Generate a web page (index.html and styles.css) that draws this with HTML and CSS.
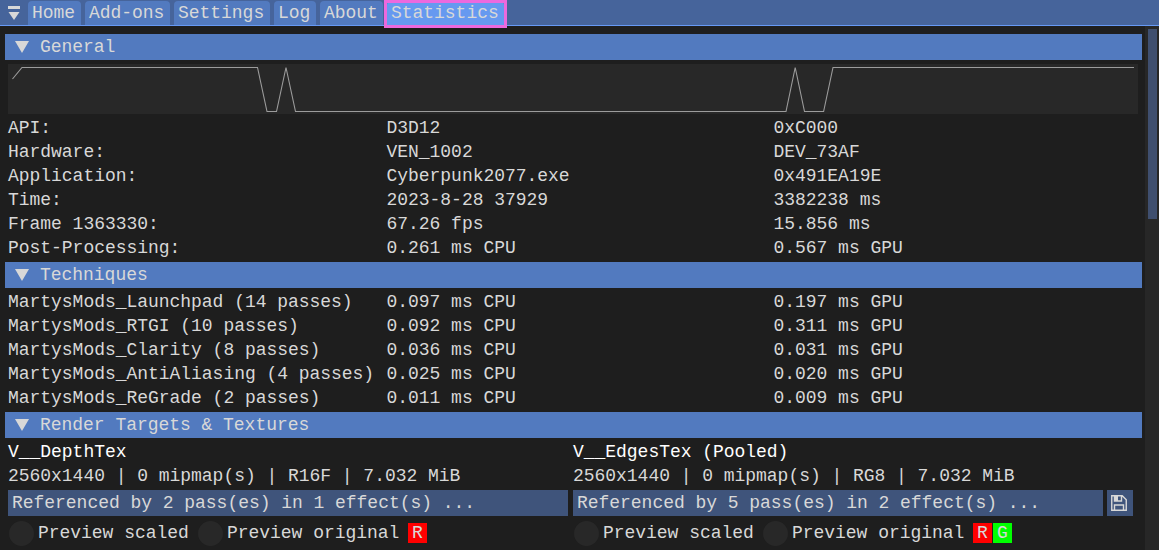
FILE: index.html
```html
<!DOCTYPE html>
<html lang="en">
<head>
<meta charset="utf-8">
<title>Statistics</title>
<link rel="stylesheet" href="styles.css">
</head>
<body>
<div class="app">
  <nav class="tabs">
    <svg class="menu" width="12" height="15" viewBox="0 0 12 15"><path d="M0 0h12v3H0zM0.500 6h11L6 14z"/></svg>
    <span class="tab home">Home</span>
    <span class="tab addons">Add-ons</span>
    <span class="tab settings">Settings</span>
    <span class="tab log">Log</span>
    <span class="tab about">About</span>
    <span class="tab active">Statistics</span>
  </nav>
  <div class="body">
    <main class="content">
      <h2 class="header"><svg class="arrow" width="14" height="12" viewBox="0 0 14 12"><path d="M0 0h14L7 12z"/></svg><span>General</span></h2>
      <svg class="graph" width="1130" height="50" viewBox="8 64 1130 50"><polyline points="12.5,79 22,67.5 257.5,67.5 267,111.5 276.5,111.5 286,67.5 295.5,111.5 786,111.5 795.2,67.5 804.5,111.5 823.6,111.5 833,67.5 1134,67.5"/></svg>
      <div class="grid info">
        <span>API:</span><span>D3D12</span><span>0xC000</span>
        <span>Hardware:</span><span>VEN_1002</span><span>DEV_73AF</span>
        <span>Application:</span><span>Cyberpunk2077.exe</span><span>0x491EA19E</span>
        <span>Time:</span><span>2023-8-28 37929</span><span>3382238 ms</span>
        <span>Frame 1363330:</span><span>67.26 fps</span><span>15.856 ms</span>
        <span>Post-Processing:</span><span>0.261 ms CPU</span><span>0.567 ms GPU</span>
      </div>
      <h2 class="header"><svg class="arrow" width="14" height="12" viewBox="0 0 14 12"><path d="M0 0h14L7 12z"/></svg><span>Techniques</span></h2>
      <div class="grid">
        <span>MartysMods_Launchpad (14 passes)</span><span>0.097 ms CPU</span><span>0.197 ms GPU</span>
        <span>MartysMods_RTGI (10 passes)</span><span>0.092 ms CPU</span><span>0.311 ms GPU</span>
        <span>MartysMods_Clarity (8 passes)</span><span>0.036 ms CPU</span><span>0.031 ms GPU</span>
        <span>MartysMods_AntiAliasing (4 passes)</span><span>0.025 ms CPU</span><span>0.020 ms GPU</span>
        <span>MartysMods_ReGrade (2 passes)</span><span>0.011 ms CPU</span><span>0.009 ms GPU</span>
      </div>
      <h2 class="header"><svg class="arrow" width="14" height="12" viewBox="0 0 14 12"><path d="M0 0h14L7 12z"/></svg><span>Render Targets &amp; Textures</span></h2>
      <div class="textures">
        <section class="texture">
          <div class="line name">V__DepthTex</div>
          <div class="line">2560x1440 | 0 mipmap(s) | R16F | 7.032 MiB</div>
          <div class="actions"><div class="button">Referenced by 2 pass(es) in 1 effect(s) ...</div></div>
          <div class="previews">
            <i class="radio"></i><span class="scaled">Preview scaled</span><i class="radio"></i><span class="original">Preview original</span><b class="channel red">R</b>
          </div>
        </section>
        <section class="texture">
          <div class="line name">V__EdgesTex (Pooled)</div>
          <div class="line">2560x1440 | 0 mipmap(s) | RG8 | 7.032 MiB</div>
          <div class="actions"><div class="button">Referenced by 5 pass(es) in 2 effect(s) ...</div>
            <div class="save"><svg width="16" height="16" viewBox="0 0 16 16"><path d="M.75.75h10.500l4 4v10.500H.75zM3.500 1v5h7V1M3.500 15v-5h9v5"/><path class="solid" d="M4 1h3v5H4z"/></svg></div></div>
          <div class="previews">
            <i class="radio"></i><span class="scaled">Preview scaled</span><i class="radio"></i><span class="original">Preview original</span><b class="channel red">R</b><b class="channel green">G</b>
          </div>
        </section>
      </div>
    </main>
    <div class="scrollbar"><div class="thumb"></div></div>
  </div>
</div>
</body>
</html>
```
FILE: styles.css
```css
* { box-sizing: border-box; }
body {
  margin: 0;
  background: #1e1e1e;
  color: #d8d8d8;
  font: 18px/24px "Liberation Mono", monospace;
  letter-spacing: -0.033px;
  white-space: nowrap;
  overflow: hidden;
}
.app { width: 1159px; height: 550px; overflow: hidden; }
.tabs {
  display: flex;
  gap: 4px;
  height: 26px;
  padding: 1px 0 0 8px;
  background: #46649b;
  border-bottom: 1px solid #6699f5;
}
.menu { margin: 5px 4px 0 0; fill: #d8d8d8; }
.tab {
  height: 24px;
  padding-left: 4px;
  border-radius: 4px 4px 0 0;
  background: #527abf;
}
.home { width: 53px; }
.addons { width: 85px; }
.settings { width: 96px; }
.log { width: 42px; }
.about { width: 63px; }
.active {
  position: relative;
  width: 117px;
  margin-left: 0;
  background: #6699f0;
}
.active::after {
  content: "";
  position: absolute;
  inset: -1px -3px -3px;
  border: 3px solid #ec69de;
}
.body { display: flex; height: 524px; }
.content { width: 1145px; padding: 8px 3px 0 5px; }
.header {
  display: flex;
  align-items: center;
  gap: 11px;
  height: 26px;
  margin: 0 0 2px;
  padding-left: 10px;
  background: #527abf;
  font-size: inherit;
  font-weight: 400;
}
.arrow { fill: #d8d8d8; }
.graph { display: block; margin: 4px 0 2px 3px; background: #282828; }
.graph polyline { fill: none; stroke: #9c9c9c; stroke-width: 1.1; }
.grid {
  display: grid;
  grid-template-columns: 378.500px 387px 1fr;
  margin-bottom: 2px;
  padding-left: 3px;
}
.textures { display: flex; gap: 5px; padding-left: 3px; }
.texture { width: 560px; }
.line { height: 24px; }
.name { color: #fff; }
.actions { display: flex; gap: 4px; height: 26px; margin-top: 2px; }
.button { flex: 1; padding-left: 4px; background: #3f547b; line-height: 26px; }
.save {
  display: grid;
  place-items: center;
  width: 26px;
  padding-right: 2px;
  background: #3f547b;
}
.save path { fill: none; stroke: #d8d8d8; stroke-width: 1.400; }
.save .solid { fill: #d8d8d8; stroke: none; }
.previews { display: flex; align-items: center; height: 26px; margin-top: 4px; padding-left: .5px; }
.radio { width: 25px; height: 25px; border-radius: 50%; background: #282828; }
.scaled { width: 164px; padding-left: 4.500px; }
.original { width: 185px; padding-left: 4.500px; }
.channel {
  width: 19px;
  height: 20px;
  margin-right: 1px;
  padding-left: 4px;
  font-weight: 400;
  line-height: 20px;
}
.original + .channel { margin-left: .5px; }
.red { background: #f00; }
.green { background: #0f0; }
.scrollbar { width: 14px; padding: 3px 2px 0 3px; background: #272727; }
.thumb { height: 190px; background: #3f4f6f; }
```
